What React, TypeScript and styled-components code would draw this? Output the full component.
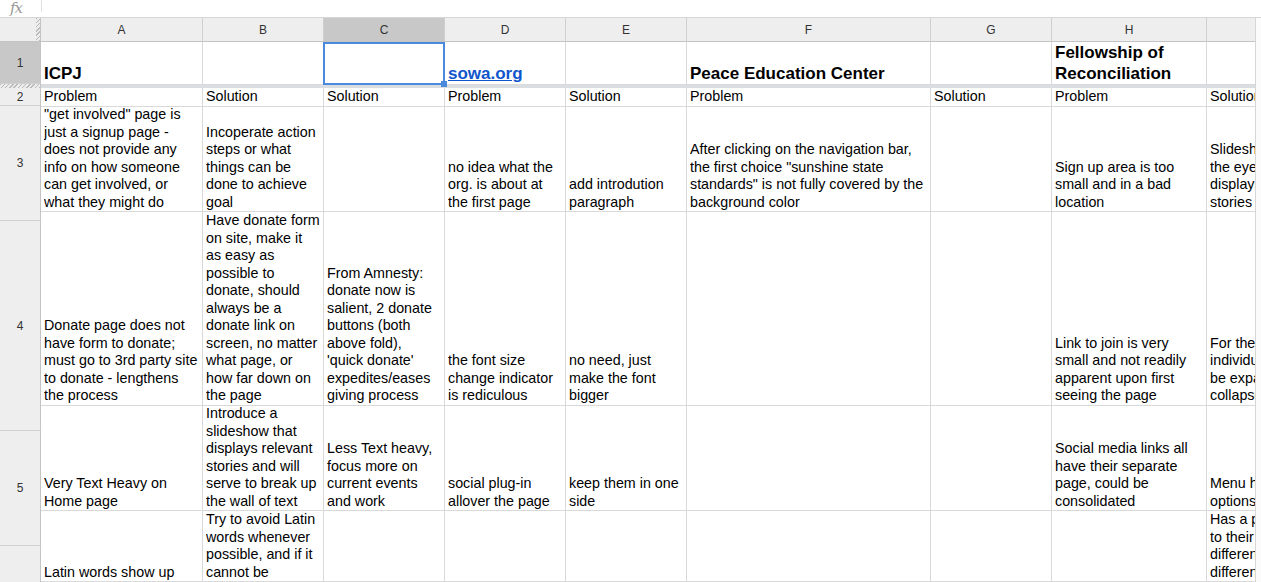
import React from 'react';
import styled, { createGlobalStyle, css } from 'styled-components';

const GlobalStyle = createGlobalStyle`
  html, body { margin: 0; padding: 0; background: #fff; }
  body { font-family: "Liberation Sans", Arial, sans-serif; overflow: hidden; }
  #root { width: 1261px; height: 582px; }
`;

const COLS = [162, 121, 121, 121, 121, 244, 121, 155, 121];
const LETTERS = ['A', 'B', 'C', 'D', 'E', 'F', 'G', 'H', 'I'];
const template = COLS.map((w) => `${w}px`).join(' ');

const hatch = 'repeating-linear-gradient(135deg, #b9b9b9 0 1px, #ececec 1px 3px)';

const Page = styled.div`
  width: 1261px;
  height: 582px;
  display: flex;
  flex-direction: column;
  overflow: hidden;
  background: #fff;
`;

const FormulaBar = styled.div`
  height: 17px;
  border-bottom: 1px solid #d6d6d6;
  display: flex;
  align-items: flex-start;
  flex-shrink: 0;
`;

const Fx = styled.span`
  width: 41px;
  box-sizing: border-box;
  padding-left: 10px;
  font-family: "DejaVu Serif", "Liberation Serif", serif;
  font-style: italic;
  font-size: 15px;
  line-height: 16px;
  color: #999;
  letter-spacing: -1px;
`;

const FormulaDivider = styled.span`
  width: 1px;
  height: 12px;
  background: #e0e0e0;
`;

const Body = styled.div`
  flex: 1;
  display: flex;
  min-height: 0;
  min-width: 0;
  width: 100%;
`;

const HeadColumn = styled.div`
  width: 41px;
  flex-shrink: 0;
  display: flex;
  flex-direction: column;
  overflow: hidden;
  background: #eeeeee;
`;

const Corner = styled.div`
  height: 24px;
  flex-shrink: 0;
  box-sizing: border-box;
  border-bottom: 1px solid #c4c4c4;
  border-right: 1px solid #c4c4c4;
  background: ${hatch} right top / 4px 100% no-repeat, #eeeeee;
`;

const RowHead = styled.div<{ $h: number; $selected?: boolean }>`
  height: ${({ $h }) => $h}px;
  flex-shrink: 0;
  box-sizing: border-box;
  border-bottom: 1px solid #cfcfcf;
  border-right: 1px solid #c4c4c4;
  background: ${({ $selected }) => ($selected ? '#c8c8c8' : '#eeeeee')};
  display: flex;
  align-items: center;
  justify-content: center;
  font-size: 12px;
  color: #333;
`;

const HeadHatch = styled.div`
  height: 4px;
  flex-shrink: 0;
  box-sizing: border-box;
  border-right: 1px solid #c4c4c4;
  background: ${hatch};
`;

const Pane = styled.div`
  flex: 1;
  min-width: 0;
  overflow: hidden;
  display: flex;
  flex-direction: column;
`;

const GridRow = styled.div<{ $h: number }>`
  display: grid;
  grid-template-columns: ${template};
  height: ${({ $h }) => $h}px;
  flex-shrink: 0;
`;

const ColHead = styled.div<{ $selected?: boolean }>`
  box-sizing: border-box;
  border-right: 1px solid #cfcfcf;
  border-bottom: 1px solid #c4c4c4;
  background: ${({ $selected }) => ($selected ? '#c8c8c8' : '#eeeeee')};
  display: flex;
  align-items: center;
  justify-content: center;
  font-size: 12px;
  color: #333;
`;

const FreezeBar = styled.div`
  height: 4px;
  flex-shrink: 0;
  background: #dadde2;
`;

const Cell = styled.div<{ $title?: boolean }>`
  position: relative;
  box-sizing: border-box;
  border-right: 1px solid #d9d9d9;
  border-bottom: 1px solid #d9d9d9;
  padding: 0 3px;
  display: flex;
  flex-direction: column;
  justify-content: flex-end;
  color: #000;
  white-space: pre;
  ${({ $title }) =>
    $title
      ? css`
          font-size: 17px;
          line-height: 21px;
          font-weight: bold;
        `
      : css`
          font-size: 14.3px;
          line-height: 17.5px;
        `}
`;

const CellText = styled.div`
  overflow: hidden;
`;

const Link = styled.a`
  color: #1155cc;
  text-decoration: underline;
`;

const Selection = styled.div`
  position: absolute;
  top: 0;
  left: -1px;
  right: -1px;
  bottom: -1px;
  border: 2px solid #4a89dc;
  z-index: 3;
  pointer-events: none;
`;

const Handle = styled.span`
  position: absolute;
  right: -4px;
  bottom: -4px;
  width: 6px;
  height: 6px;
  background: #4a89dc;
`;

const Scrollbar = styled.div`
  width: 5px;
  flex-shrink: 0;
  border-left: 1px solid #d6d6d6;
  background: #fbfbfb;
`;

const BottomEdge = styled.div`
  flex: 1;
  background: #f4f4f4;
  border-top: 1px solid #d9d9d9;
`;

type Row = { n: number; h: number; head: number; cells: string[] };

const rows: Row[] = [
  {
    n: 3,
    h: 106,
    head: 115,
    cells: [
      '"get involved" page is\njust a signup page -\ndoes not provide any\ninfo on how someone\ncan get involved, or\nwhat they might do',
      'Incoperate action\nsteps or what\nthings can be\ndone to achieve\ngoal',
      '',
      'no idea what the\norg. is about at\nthe first page',
      'add introdution\nparagraph',
      'After clicking on the navigation bar,\nthe first choice "sunshine state\nstandards" is not fully covered by the\nbackground color',
      '',
      'Sign up area is too\nsmall and in a bad\nlocation',
      'Slideshow catches\nthe eye and\ndisplays relevant\nstories',
    ],
  },
  {
    n: 4,
    h: 193,
    head: 210,
    cells: [
      'Donate page does not\nhave form to donate;\nmust go to 3rd party site\nto donate - lengthens\nthe process',
      'Have donate form\non site, make it\nas easy as\npossible to\ndonate, should\nalways be a\ndonate link on\nscreen, no matter\nwhat page, or\nhow far down on\nthe page',
      "From Amnesty:\ndonate now is\nsalient, 2 donate\nbuttons (both\nabove fold),\n'quick donate'\nexpedites/eases\ngiving process",
      'the font size\nchange indicator\nis rediculous',
      'no need, just\nmake the font\nbigger',
      '',
      '',
      'Link to join is very\nsmall and not readily\napparent upon first\nseeing the page',
      'For the programs\nindividually, can\nbe expanded or\ncollapsed',
    ],
  },
  {
    n: 5,
    h: 106,
    head: 115,
    cells: [
      'Very Text Heavy on\nHome page',
      'Introduce a\nslideshow that\ndisplays relevant\nstories and will\nserve to break up\nthe wall of text',
      'Less Text heavy,\nfocus more on\ncurrent events\nand work',
      'social plug-in\nallover the page',
      'keep them in one\nside',
      '',
      '',
      'Social media links all\nhave their separate\npage, could be\nconsolidated',
      'Menu has too many\noptions',
    ],
  },
  {
    n: 6,
    h: 70,
    head: 115,
    cells: [
      'Latin words show up',
      'Try to avoid Latin\nwords whenever\npossible, and if it\ncannot be',
      '',
      '',
      '',
      '',
      '',
      '',
      'Has a page linking\nto their\ndifferent programs\ndifferent',
    ],
  },
];

const row2 = ['Problem', 'Solution', 'Solution', 'Problem', 'Solution', 'Problem', 'Solution', 'Problem', 'Solution'];

export default function App() {
  return (
    <Page>
      <GlobalStyle />
      <FormulaBar>
        <Fx>fx</Fx>
        <FormulaDivider />
      </FormulaBar>
      <Body>
        <HeadColumn>
          <Corner />
          <RowHead $h={42} $selected>1</RowHead>
          <HeadHatch />
          <RowHead $h={18}>2</RowHead>
          {rows.map((r) => (
            <RowHead key={r.n} $h={r.head}>{r.n}</RowHead>
          ))}
        </HeadColumn>
        <Pane>
          <GridRow $h={24}>
            {LETTERS.map((l) => (
              <ColHead key={l} $selected={l === 'C'}>{l}</ColHead>
            ))}
          </GridRow>
          <GridRow $h={42}>
            <Cell $title><CellText>ICPJ</CellText></Cell>
            <Cell $title />
            <Cell $title>
              <Selection>
                <Handle />
              </Selection>
            </Cell>
            <Cell $title><CellText><Link href="#">sowa.org</Link></CellText></Cell>
            <Cell $title />
            <Cell $title><CellText>Peace Education Center</CellText></Cell>
            <Cell $title />
            <Cell $title><CellText>{'Fellowship of\nReconciliation'}</CellText></Cell>
            <Cell $title />
          </GridRow>
          <FreezeBar />
          <GridRow $h={18}>
            {row2.map((t, i) => (
              <Cell key={i}><CellText>{t}</CellText></Cell>
            ))}
          </GridRow>
          {rows.map((r) => (
            <GridRow key={r.n} $h={r.h}>
              {r.cells.map((t, i) => (
                <Cell key={i}><CellText>{t}</CellText></Cell>
              ))}
            </GridRow>
          ))}
          <BottomEdge />
        </Pane>
        <Scrollbar />
      </Body>
    </Page>
  );
}
